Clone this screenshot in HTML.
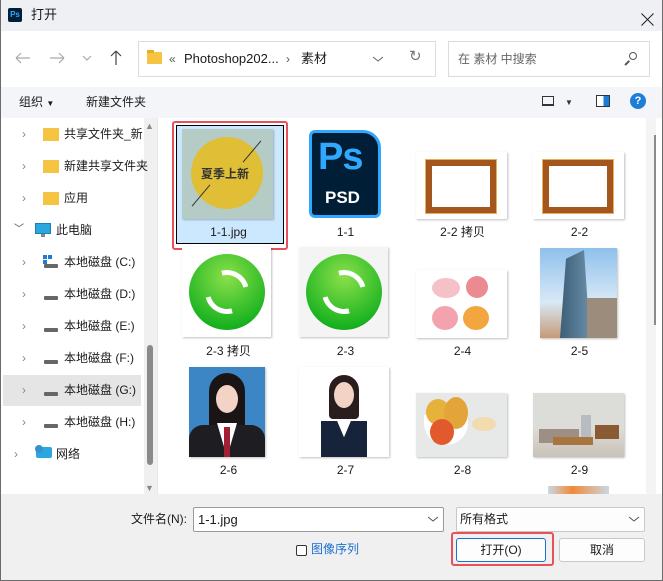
<!DOCTYPE html><html><head><meta charset="utf-8"><style>
*{margin:0;padding:0;box-sizing:border-box}
body{width:663px;height:581px;overflow:hidden;background:#fff;font-family:"Liberation Sans","Noto Sans CJK SC",sans-serif;font-size:12px;color:#1a1a1a;position:relative}
.a{position:absolute}
.t{position:absolute;white-space:nowrap;line-height:16px}
.lbl{position:absolute;width:117px;text-align:center;font-size:12px;line-height:14px}
.sh{box-shadow:1px 1px 2px rgba(0,0,0,.25)}
</style></head><body>
<div class="a" style="left:0;top:0;width:663px;height:581px;border:1px solid #6b6b6b;border-top:none"></div>
<!-- title -->
<div class="a" style="left:1px;top:0;width:661px;height:31px;background:#eef0f3"></div>
<div class="a" style="left:8px;top:8px;width:14px;height:14px;background:#001e36;border-radius:2px;color:#31a8ff;font-size:8px;font-weight:bold;line-height:14px;text-align:center">Ps</div>
<div class="t" style="left:31px;top:7px;font-size:13px">打开</div>
<div class="a" style="left:639px;top:19px;width:17px;height:1px;background:#222;transform:rotate(45deg)"></div>
<div class="a" style="left:639px;top:19px;width:17px;height:1px;background:#222;transform:rotate(-45deg)"></div>
<!-- nav -->
<svg class="a" style="left:0;top:40px" width="135" height="36" viewBox="0 0 135 36" fill="none" stroke-width="1.2">
<path d="M16 18h14M16 18l5-5M16 18l5 5" stroke="#aaa"/>
<path d="M50 18h14M64 18l-5-5M64 18l-5 5" stroke="#aaa"/>
<path d="M83 16l4 4 4-4" stroke="#aaa"/>
<path d="M116 11v14M116 11l-5 5M116 11l5 5" stroke="#444"/>
</svg>
<div class="a" style="left:138px;top:41px;width:298px;height:36px;border:1px solid #dcdcdc;background:#fff"></div>
<div class="a" style="left:147px;top:52px;width:15px;height:12px;background:#f5c443;border-radius:1px"></div>
<div class="a" style="left:147px;top:50px;width:7px;height:3px;background:#e6ad2a"></div>
<div class="t" style="left:169px;top:51px;color:#555">«</div>
<div class="t" style="left:184px;top:51px;font-size:13px">Photoshop202...</div>
<div class="t" style="left:286px;top:51px;color:#555">›</div>
<div class="t" style="left:301px;top:51px;font-size:13px">素材</div>
<svg class="a" style="left:372px;top:55px" width="12" height="8"><path d="M1 2l5 4 5-4" stroke="#666" fill="none"/></svg>
<div class="t" style="left:409px;top:49px;color:#777;font-size:15px">↻</div>
<div class="a" style="left:448px;top:41px;width:202px;height:36px;border:1px solid #dcdcdc;background:#fff"></div>
<div class="t" style="left:458px;top:51px;color:#666;font-size:12px">在 素材 中搜索</div>
<div class="a" style="left:629px;top:52px;width:8px;height:8px;border:1.5px solid #555;border-radius:50%"></div>
<div class="a" style="left:624px;top:62px;width:6px;height:1.5px;background:#555;transform:rotate(-45deg)"></div>
<!-- cmd -->
<div class="a" style="left:1px;top:87px;width:661px;height:31px;background:#f3f5f8"></div>
<div class="t" style="left:19px;top:94px">组织 <span style="font-size:8px">▼</span></div>
<div class="t" style="left:86px;top:94px">新建文件夹</div>
<div class="a" style="left:542px;top:96px;width:12px;height:10px;border:1px solid #333;border-bottom-width:2px"></div>
<div class="t" style="left:565px;top:95px;font-size:8px;color:#333">▼</div>
<div class="a" style="left:596px;top:95px;width:14px;height:12px;border:1px solid #333;background:linear-gradient(90deg,#fff 55%,#1a7ed8 55%)"></div>
<div class="a" style="left:630px;top:93px;width:16px;height:16px;border-radius:50%;background:#1c7ed6;color:#fff;font-weight:bold;font-size:11px;line-height:16px;text-align:center">?</div>
<!-- sidebar -->
<div class="a" style="left:3px;top:375px;width:138px;height:31px;background:#e5e5e5"></div>
<div class="a" style="left:144px;top:118px;width:13px;height:376px;background:#f0f0f0"></div>
<div class="t" style="left:145px;top:118px;font-size:9px;color:#888">▲</div>
<div class="t" style="left:145px;top:480px;font-size:9px;color:#888">▼</div>
<div class="a" style="left:147px;top:345px;width:6px;height:120px;background:#8a8a8a;border-radius:3px"></div>
<div class="a" style="left:157px;top:118px;width:1px;height:376px;background:#e8e8e8"></div>
<div style="color:#888">
<div class="t" style="left:22px;top:126px">›</div><div class="t" style="left:22px;top:158px">›</div><div class="t" style="left:22px;top:190px">›</div>
<div class="t" style="left:14px;top:222px;font-size:10px;color:#444">﹀</div>
<div class="t" style="left:22px;top:254px">›</div><div class="t" style="left:22px;top:286px">›</div><div class="t" style="left:22px;top:318px">›</div><div class="t" style="left:22px;top:350px">›</div><div class="t" style="left:22px;top:382px">›</div><div class="t" style="left:22px;top:414px">›</div><div class="t" style="left:14px;top:446px">›</div>
</div>
<div class="a" style="left:43px;top:128px;width:16px;height:13px;background:#f5c443"></div>
<div class="a" style="left:43px;top:160px;width:16px;height:13px;background:#f5c443"></div>
<div class="a" style="left:43px;top:192px;width:16px;height:13px;background:#f5c443"></div>
<div class="a" style="left:35px;top:223px;width:16px;height:11px;background:#29a8e0;border:1px solid #1a7fb3"></div>
<div class="a" style="left:41px;top:234px;width:4px;height:3px;background:#888"></div>
<div class="a" style="left:43px;top:255px;width:4px;height:4px;background:#1f7ad8;box-shadow:5px 0 #1f7ad8,0 5px #1f7ad8"></div>
<div class="a" style="left:44px;top:264px;width:14px;height:4px;background:#666;border-radius:1px"></div>
<div class="a" style="left:44px;top:296px;width:14px;height:4px;background:#666;border-radius:1px"></div>
<div class="a" style="left:44px;top:328px;width:14px;height:4px;background:#666;border-radius:1px"></div>
<div class="a" style="left:44px;top:360px;width:14px;height:4px;background:#666;border-radius:1px"></div>
<div class="a" style="left:44px;top:392px;width:14px;height:4px;background:#666;border-radius:1px"></div>
<div class="a" style="left:44px;top:424px;width:14px;height:4px;background:#666;border-radius:1px"></div>
<div class="a" style="left:36px;top:447px;width:16px;height:11px;background:#29a8e0;border-radius:2px"></div>
<div class="a" style="left:35px;top:445px;width:8px;height:8px;background:#3a8fd0;border-radius:50%"></div>
<div class="t" style="left:64px;top:126px">共享文件夹_新</div>
<div class="t" style="left:64px;top:158px">新建共享文件夹</div>
<div class="t" style="left:64px;top:190px">应用</div>
<div class="t" style="left:56px;top:222px">此电脑</div>
<div class="t" style="left:64px;top:254px">本地磁盘 (C:)</div>
<div class="t" style="left:64px;top:286px">本地磁盘 (D:)</div>
<div class="t" style="left:64px;top:318px">本地磁盘 (E:)</div>
<div class="t" style="left:64px;top:350px">本地磁盘 (F:)</div>
<div class="t" style="left:64px;top:382px">本地磁盘 (G:)</div>
<div class="t" style="left:64px;top:414px">本地磁盘 (H:)</div>
<div class="t" style="left:56px;top:446px">网络</div>
<!-- grid scrollbar -->
<div class="a" style="left:646px;top:118px;width:10px;height:376px;background:#f4f4f4"></div>
<div class="a" style="left:654px;top:135px;width:2px;height:190px;background:#8a8a8a"></div>
<!-- selection -->
<div class="a" style="left:172px;top:121px;width:116px;height:129px;border:2px solid #e8505b;border-radius:3px"></div>
<div class="a" style="left:176px;top:125px;width:108px;height:119px;background:#cce8ff;border:1px solid #000"></div>
<!-- row1 -->
<div class="a sh" style="left:182px;top:129px;width:91px;height:90px;background:#b5cbc6;overflow:hidden">
<div class="a" style="left:9px;top:8px;width:72px;height:72px;border-radius:50%;background:#e0bf36"></div>
<div class="t" style="left:19px;top:37px;font-weight:bold;font-size:12px;color:#333">夏季上新</div>
<div class="a" style="left:56px;top:22px;width:28px;height:1px;background:#333;transform:rotate(-50deg)"></div>
<div class="a" style="left:5px;top:66px;width:28px;height:1px;background:#333;transform:rotate(-50deg)"></div>
</div>
<div class="a" style="left:309px;top:130px;width:72px;height:88px;background:#001e36;border:3px solid #31a8ff;border-radius:6px 18px 6px 6px">
<div class="t" style="left:6px;top:2px;font-size:38px;line-height:44px;font-weight:bold;color:#31a8ff;letter-spacing:-1px">Ps</div>
<div class="t" style="left:13px;top:55px;font-size:17px;line-height:20px;font-weight:bold;color:#fff">PSD</div>
</div>
<div class="a sh" style="left:416px;top:152px;width:91px;height:67px;background:#fff"><div class="a" style="left:10px;top:8px;width:70px;height:53px;border:6px solid #a5561c;outline:1px solid #e2b35a"></div></div>
<div class="a sh" style="left:533px;top:152px;width:91px;height:67px;background:#fff"><div class="a" style="left:10px;top:8px;width:70px;height:53px;border:6px solid #a5561c;outline:1px solid #e2b35a"></div></div>
<div class="lbl" style="left:170px;top:225px">1-1.jpg</div>
<div class="lbl" style="left:287px;top:225px">1-1</div>
<div class="lbl" style="left:404px;top:225px">2-2 拷贝</div>
<div class="lbl" style="left:521px;top:225px">2-2</div>
<!-- row2 -->
<div class="a sh" style="left:182px;top:247px;width:89px;height:90px;background:#fff"><div class="a" style="left:7px;top:7px;width:76px;height:76px;border-radius:50%;background:radial-gradient(circle at 50% 30%,#8be04a,#19b320 75%,#0c8f15);"><div class="a" style="left:16px;top:16px;width:44px;height:44px;border:5px solid #fff;border-radius:50%;border-left-color:transparent;border-right-color:transparent;transform:rotate(30deg)"></div></div></div>
<div class="a sh" style="left:299px;top:247px;width:89px;height:90px;background:#f4f4f4"><div class="a" style="left:7px;top:7px;width:76px;height:76px;border-radius:50%;background:radial-gradient(circle at 50% 30%,#8be04a,#19b320 75%,#0c8f15);"><div class="a" style="left:16px;top:16px;width:44px;height:44px;border:5px solid #fff;border-radius:50%;border-left-color:transparent;border-right-color:transparent;transform:rotate(30deg)"></div></div></div>
<div class="a sh" style="left:416px;top:270px;width:91px;height:68px;background:#fff">
<div class="a" style="left:16px;top:8px;width:28px;height:20px;border-radius:50%;background:#f6c0c8"></div>
<div class="a" style="left:50px;top:6px;width:22px;height:22px;border-radius:50%;background:#ec8a92"></div>
<div class="a" style="left:16px;top:36px;width:26px;height:24px;border-radius:50%;background:#f3a3ae"></div>
<div class="a" style="left:47px;top:36px;width:26px;height:24px;border-radius:50%;background:#f3a640"></div></div>
<div class="a sh" style="left:540px;top:248px;width:77px;height:90px;background:linear-gradient(#8fc0ec,#d8e9f7 60%,#c69a78)">
<div class="a" style="left:20px;top:2px;width:30px;height:88px;background:linear-gradient(90deg,#3c5f78,#6a8ea8);clip-path:polygon(20% 10%,80% 0,100% 100%,0 100%)"></div>
<div class="a" style="left:47px;top:50px;width:30px;height:40px;background:#9b8c7c"></div></div>
<div class="lbl" style="left:170px;top:344px">2-3 拷贝</div>
<div class="lbl" style="left:287px;top:344px">2-3</div>
<div class="lbl" style="left:404px;top:344px">2-4</div>
<div class="lbl" style="left:521px;top:344px">2-5</div>
<!-- row3 -->
<div class="a sh" style="left:189px;top:367px;width:76px;height:90px;background:#3d86c6;overflow:hidden">
<div class="a" style="left:20px;top:6px;width:36px;height:60px;border-radius:18px 18px 4px 4px;background:#1a1414"></div>
<div class="a" style="left:27px;top:18px;width:22px;height:28px;border-radius:50%;background:#f2d3c6"></div>
<div class="a" style="left:0;top:58px;width:76px;height:32px;background:#1e1e22;border-radius:14px 14px 0 0"></div>
<div class="a" style="left:28px;top:56px;width:20px;height:34px;background:#fff;clip-path:polygon(0 0,100% 0,50% 100%)"></div>
<div class="a" style="left:35px;top:60px;width:6px;height:30px;background:#a21f35"></div></div>
<div class="a sh" style="left:299px;top:367px;width:90px;height:90px;background:#fff;overflow:hidden">
<div class="a" style="left:30px;top:8px;width:30px;height:44px;border-radius:15px 15px 4px 4px;background:#2a1d1d"></div>
<div class="a" style="left:35px;top:15px;width:20px;height:26px;border-radius:50%;background:#f2d3c6"></div>
<div class="a" style="left:12px;top:54px;width:66px;height:36px;background:#fff;border-radius:12px 12px 0 0"></div>
<div class="a" style="left:22px;top:54px;width:46px;height:36px;background:#17233a;clip-path:polygon(0 0,35% 0,50% 45%,65% 0,100% 0,100% 100%,0 100%)"></div></div>
<div class="a sh" style="left:416px;top:393px;width:91px;height:64px;background:#e7e9e9">
<div class="a" style="left:8px;top:22px;width:44px;height:30px;background:#fff;border-radius:0 0 22px 22px"></div>
<div class="a" style="left:10px;top:6px;width:24px;height:26px;border-radius:50%;background:#e7b23c"></div>
<div class="a" style="left:28px;top:4px;width:24px;height:32px;border-radius:50%;background:#e3a53a"></div>
<div class="a" style="left:14px;top:26px;width:24px;height:26px;border-radius:50%;background:#e05a2e"></div>
<div class="a" style="left:56px;top:24px;width:24px;height:14px;border-radius:50%;background:#f3dbb0"></div></div>
<div class="a sh" style="left:533px;top:393px;width:91px;height:64px;background:linear-gradient(#dcdcd8 55%,#c9c2b7)">
<div class="a" style="left:48px;top:22px;width:10px;height:24px;background:#b8bcc0"></div>
<div class="a" style="left:6px;top:36px;width:40px;height:14px;background:#9d8f84"></div>
<div class="a" style="left:20px;top:44px;width:40px;height:8px;background:#a8753f"></div>
<div class="a" style="left:62px;top:32px;width:24px;height:14px;background:#8a5a32"></div></div>
<div class="lbl" style="left:170px;top:463px">2-6</div>
<div class="lbl" style="left:287px;top:463px">2-7</div>
<div class="lbl" style="left:404px;top:463px">2-8</div>
<div class="lbl" style="left:521px;top:463px">2-9</div>
<div class="a" style="left:548px;top:486px;width:61px;height:8px;background:linear-gradient(90deg,#c9d8e4,#f08a3a 40%,#c9d8e4)"></div>
<!-- bottom -->
<div class="a" style="left:1px;top:494px;width:661px;height:86px;background:#f0f0f0"></div>
<div class="t" style="left:131px;top:511px">文件名(N):</div>
<div class="a" style="left:193px;top:507px;width:251px;height:25px;background:#fff;border:1px solid #9a9a9a;border-radius:2px"></div>
<div class="t" style="left:198px;top:512px;font-size:13px">1-1.jpg</div>
<svg class="a" style="left:427px;top:515px" width="12" height="8"><path d="M1 2l5 4 5-4" stroke="#555" fill="none"/></svg>
<div class="a" style="left:456px;top:507px;width:189px;height:25px;background:#fdfdfd;border:1px solid #c8c8c8;border-radius:2px"></div>
<div class="t" style="left:460px;top:511px">所有格式</div>
<svg class="a" style="left:628px;top:515px" width="12" height="8"><path d="M1 2l5 4 5-4" stroke="#555" fill="none"/></svg>
<div class="a" style="left:296px;top:545px;width:11px;height:11px;border:1px solid #333;border-radius:2px;background:#fff"></div>
<div class="t" style="left:311px;top:541px;color:#1a6fd0">图像序列</div>
<div class="a" style="left:451px;top:532px;width:103px;height:34px;border:2px solid #e8505b;border-radius:3px"></div>
<div class="a" style="left:456px;top:538px;width:90px;height:24px;background:#fdfdfd;border:1px solid #1a6fd0;border-radius:3px;text-align:center;line-height:22px">打开(O)</div>
<div class="a" style="left:559px;top:538px;width:86px;height:24px;background:#fdfdfd;border:1px solid #c8c8c8;border-radius:3px;text-align:center;line-height:22px">取消</div>
</body></html>
